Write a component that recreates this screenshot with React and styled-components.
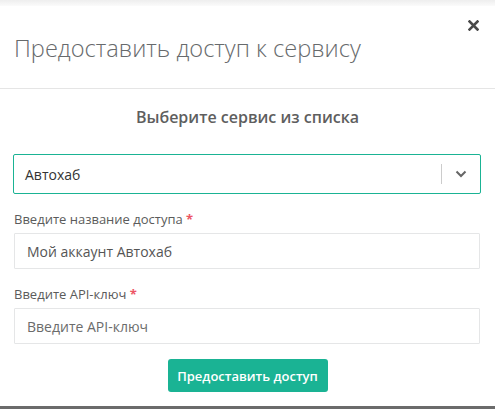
import React from "react";
import styled, { createGlobalStyle } from "styled-components";

const Global = createGlobalStyle`
  html, body { margin: 0; padding: 0; background: #ffffff; }
  body { font-family: "Open Sans", "Liberation Sans", sans-serif; }
  * { box-sizing: border-box; }
`;

const Page = styled.div`
  width: 495px;
  height: 409px;
  display: flex;
  flex-direction: column;
  background: #fff;
  overflow: hidden;
`;

const TopShade = styled.div`
  height: 6px;
  background: linear-gradient(#eeeeee, #fbfbfb);
`;

const Header = styled.div`
  position: relative;
  height: 83px;
  border-bottom: 1px solid #e5e5e5;
  padding: 26px 15px 0 14px;
`;

const Title = styled.h4`
  margin: 0;
  font-size: 23.6px;
  font-weight: 300;
  color: #676a6c;
  line-height: 32px;
`;

const Close = styled.button`
  position: absolute;
  top: 12px;
  right: 15px;
  border: 0;
  background: none;
  padding: 0;
  width: 14px;
  height: 14px;
  display: flex;
  align-items: center;
  justify-content: center;
  cursor: pointer;
`;

const Body = styled.div`
  flex: 1;
  display: flex;
  flex-direction: column;
  padding: 17px 14px 0 14px;
`;

const Heading = styled.div`
  text-align: center;
  font-size: 16px;
  font-weight: 600;
  color: #5e5e5e;
  line-height: 22px;
  margin-bottom: 26px;
`;

const Select = styled.div`
  display: flex;
  align-items: center;
  height: 40px;
  margin-left: -1px;
  border: 1px solid #1ab394;
  border-radius: 2px;
`;

const SelectValue = styled.div`
  flex: 1;
  padding-left: 11px;
  font-size: 14px;
  color: #333;
`;

const Sep = styled.span`
  width: 1px;
  height: 20px;
  background: #cccccc;
`;

const Chevron = styled.div`
  width: 38px;
  display: flex;
  justify-content: center;
  align-items: center;
`;

const Label = styled.label`
  display: block;
  font-size: 13px;
  color: #5b5b5b;
  line-height: 18px;
  margin-top: ${(p) => p.$mt}px;
  margin-bottom: 5px;
`;

const Star = styled.span`
  color: #ed5565;
  font-weight: 700;
`;

const Input = styled.input`
  width: 466px;
  height: 36px;
  border: 1px solid #e5e6e7;
  border-radius: 1px;
  padding: 0 12px;
  font-family: "Open Sans", "Liberation Sans", sans-serif;
  font-size: 14px;
  color: #555;
  outline: none;
  &::placeholder { color: #6b6b6b; opacity: 1; }
`;

const Actions = styled.div`
  display: flex;
  justify-content: center;
  margin-top: 15px;
`;

const Button = styled.button`
  width: 160px;
  height: 33px;
  border: 0;
  border-radius: 3px;
  background: #1ab394;
  color: #fff;
  font-family: "Open Sans", "Liberation Sans", sans-serif;
  font-size: 13px;
  font-weight: 600;
`;

const BottomBar = styled.div`
  height: 3px;
  background: #6b6b6b;
`;

export default function App() {
  return (
    <Page>
      <Global />
      <TopShade />
      <Header>
        <Close aria-label="close">
          <svg width="11" height="11" viewBox="0 0 11 11">
            <path d="M1.5 1.5 L9.5 9.5 M9.5 1.5 L1.5 9.5" stroke="#4a4a4a" strokeWidth="2.6" strokeLinecap="square" />
          </svg>
        </Close>
        <Title>Предоставить доступ к сервису</Title>
      </Header>
      <Body>
        <Heading>Выберите сервис из списка</Heading>
        <Select>
          <SelectValue>Автохаб</SelectValue>
          <Sep />
          <Chevron>
            <svg width="12" height="8" viewBox="0 0 12 8">
              <path d="M1.5 1.5 L6 6 L10.5 1.5" fill="none" stroke="#666" strokeWidth="2" />
            </svg>
          </Chevron>
        </Select>
        <Label $mt={16}>
          Введите название доступа <Star>*</Star>
        </Label>
        <Input defaultValue="Мой аккаунт Автохаб" />
        <Label $mt={16}>
          Введите API-ключ <Star>*</Star>
        </Label>
        <Input placeholder="Введите API-ключ" />
        <Actions>
          <Button>Предоставить доступ</Button>
        </Actions>
      </Body>
      <BottomBar />
    </Page>
  );
}
